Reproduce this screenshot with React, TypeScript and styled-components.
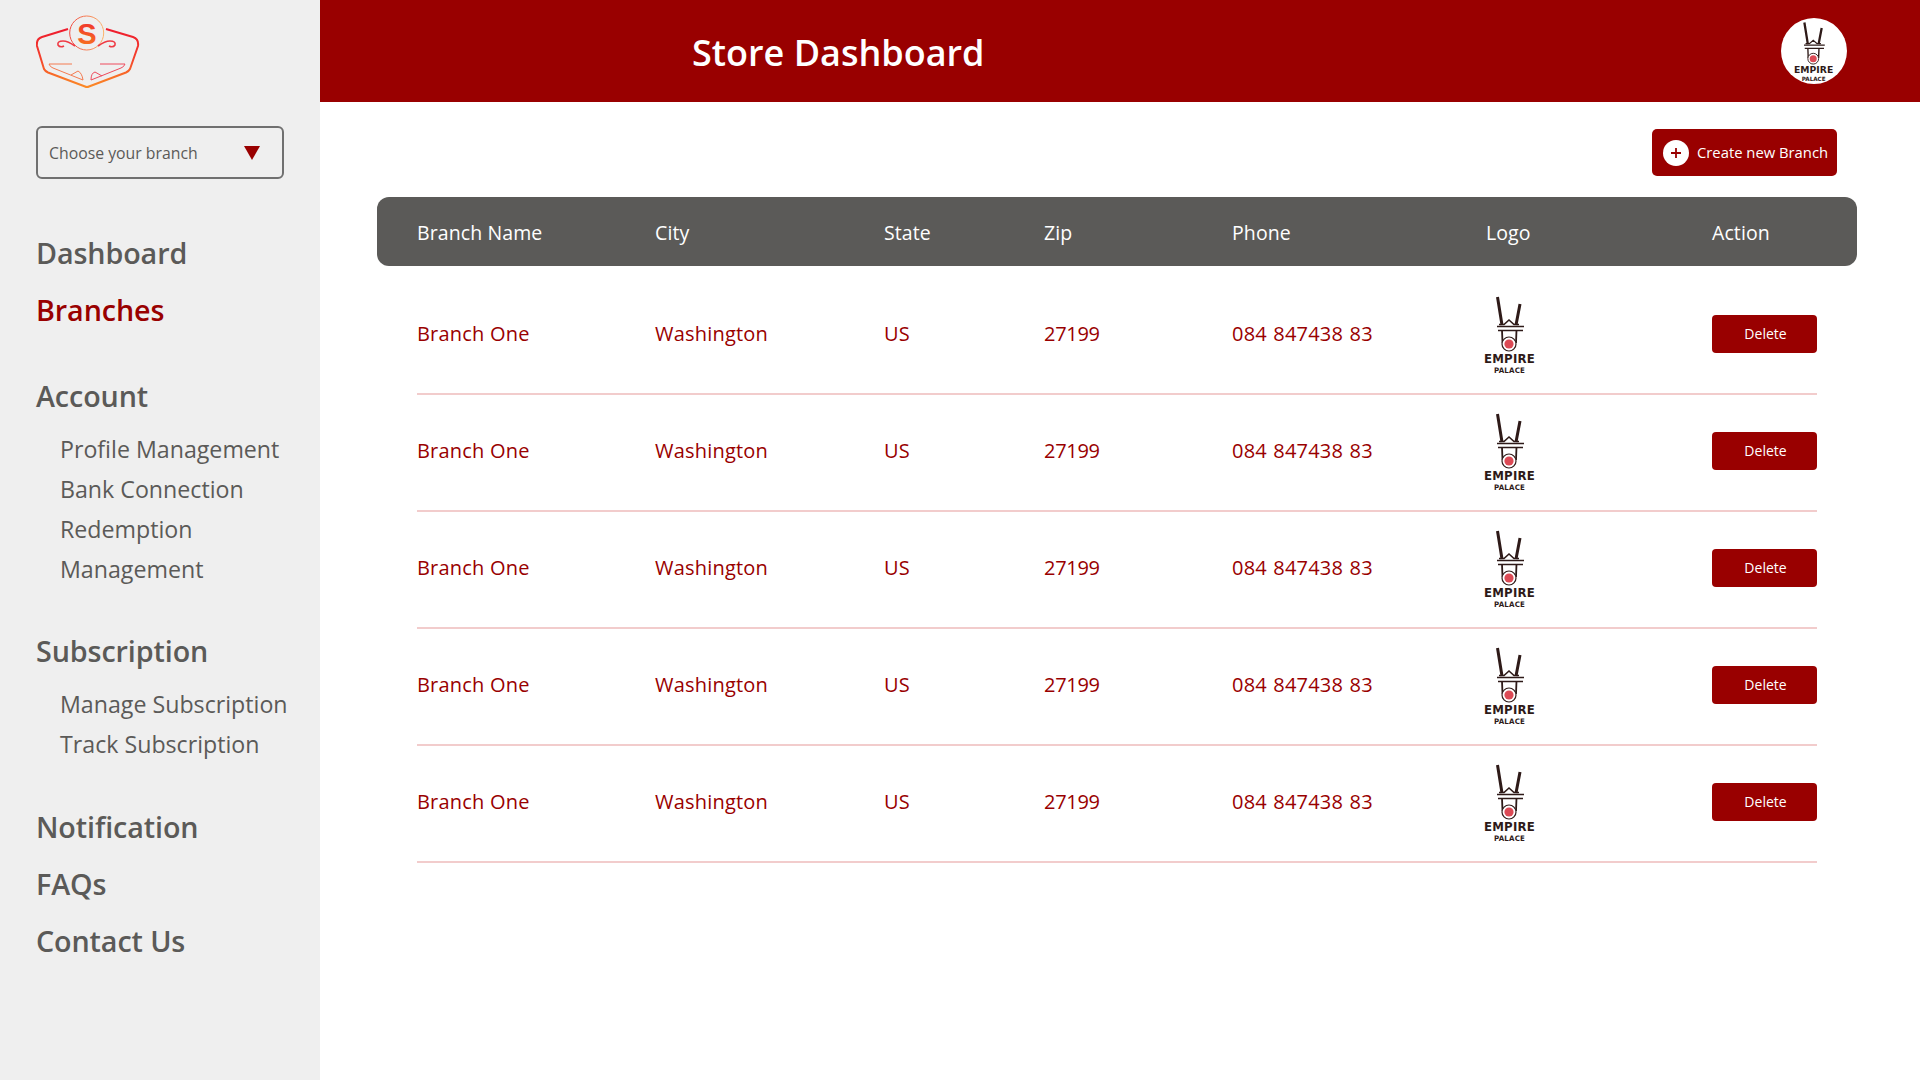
import React from "react";
import styled, { createGlobalStyle } from "styled-components";

const RED = "#990000";
const GREY = "#5b5a58";

const branches = [1, 2, 3, 4, 5].map((id) => ({
    id,
    name: "Branch One",
    city: "Washington",
    state: "US",
    zip: "27199",
    phone: "084 847438 83",
}));

const GlobalStyle = createGlobalStyle`
    * { box-sizing: border-box; }
    html, body { margin: 0; padding: 0; background: #fff; }
    body { font-family: "Open Sans", "Noto Sans", sans-serif; }
`;

const BrandLogo = () => (
    <svg width="104" height="74" viewBox="0 0 104 74" fill="none">
        <defs>
            <linearGradient id="brandStroke" gradientUnits="userSpaceOnUse" x1="0" y1="14" x2="0" y2="72">
                <stop offset="0" stopColor="#ee1c2e" />
                <stop offset="0.5" stopColor="#f4402c" />
                <stop offset="1" stopColor="#fb8a26" />
            </linearGradient>
            <linearGradient id="brandRing" x1="0" y1="0" x2="1" y2="0">
                <stop offset="0" stopColor="#f0483e" />
                <stop offset="1" stopColor="#fbb36a" />
            </linearGradient>
            <linearGradient id="brandS" x1="0" y1="0" x2="0" y2="1">
                <stop offset="0" stopColor="#ee2a30" />
                <stop offset="1" stopColor="#f97a1e" />
            </linearGradient>
        </defs>
        <path
            d="M32 14 L6 22 Q0 24 1 31 L8 54 Q9 56 12 57.5 L49 71.5 Q51 72.5 53 71.5 L90 57.5 Q93 56 94 54 L102 31 Q103 24 97 22 L70 14"
            stroke="url(#brandStroke)"
            strokeWidth="2"
            strokeLinejoin="round"
        />
        <circle cx="50.7" cy="18" r="17" stroke="url(#brandRing)" strokeWidth="1" />
        <text x="51" y="28.5" textAnchor="middle" fontFamily="Liberation Sans, sans-serif" fontWeight="700" fontSize="29" fill="url(#brandS)">S</text>
        <path d="M39 31 Q32 26 27 26 Q21 26 22 30 Q24 33 28 31" stroke="#ef3a44" strokeWidth="1.6" />
        <path d="M62 31 Q69 26 74 26 Q80 26 79 30 Q77 33 73 31" stroke="#ef3a44" strokeWidth="1.6" />
        <path d="M13 49 L36 49 M13 49 Q14 52 17 53 L47 65 Q46 58 42 56 L35 60" stroke="#f47a50" strokeWidth="1" />
        <path d="M89 49 L64 49 M89 49 Q88 52 85 53 L55 65 Q55 58 59 57 L66 61" stroke="#ee4a5c" strokeWidth="1" />
    </svg>
);

const EmpireMark = ({ className }: { className?: string }) => (
    <svg className={className} width="52" height="78" viewBox="0 0 52 78" fill="none">
        <path d="M13.5 2 L18 30 M36 9 L32 30" stroke="#2e1a18" strokeWidth="3" />
        <path d="M15 29.5 L20 29.5 L25 25 L30 29.5 L35 29.5" stroke="#2e1a18" strokeWidth="1.6" />
        <path d="M13 31.5 L40 31.5 M14 35.5 L39 35.5" stroke="#2e1a18" strokeWidth="1.6" />
        <path d="M18 35 L18.5 48 M32.5 35 L32 48" stroke="#2e1a18" strokeWidth="1.8" />
        <circle cx="25" cy="49" r="7" fill="#fff" stroke="#2e1a18" strokeWidth="1.2" />
        <circle cx="25" cy="49" r="4.6" fill="#dc4a55" />
        <text x="25.5" y="68" textAnchor="middle" fontFamily="DejaVu Sans, sans-serif" fontWeight="700" fontSize="11.5" textLength="51" lengthAdjust="spacingAndGlyphs" fill="#2e1a18">EMPIRE</text>
        <text x="25.5" y="77.5" textAnchor="middle" fontFamily="DejaVu Sans, sans-serif" fontWeight="700" fontSize="7.5" textLength="31" lengthAdjust="spacingAndGlyphs" fill="#2e1a18">PALACE</text>
    </svg>
);

const App = () => {
    return (
        <Page>
            <GlobalStyle />
            <Sidebar>
                <LogoWrap><BrandLogo /></LogoWrap>
                <BranchSelect>
                    <span>Choose your branch</span>
                    <Caret />
                </BranchSelect>
                <Nav>
                    <NavGroup>
                        <NavTitle>Dashboard</NavTitle>
                        <NavTitle $active>Branches</NavTitle>
                    </NavGroup>
                    <NavGroup>
                        <NavTitle>Account</NavTitle>
                        <SubList>
                            <SubItem>Profile Management</SubItem>
                            <SubItem>Bank Connection</SubItem>
                            <SubItem>Redemption</SubItem>
                            <SubItem>Management</SubItem>
                        </SubList>
                    </NavGroup>
                    <NavGroup>
                        <NavTitle>Subscription</NavTitle>
                        <SubList>
                            <SubItem>Manage Subscription</SubItem>
                            <SubItem>Track Subscription</SubItem>
                        </SubList>
                    </NavGroup>
                    <LastGroup>
                        <NavTitle>Notification</NavTitle>
                        <NavTitle>FAQs</NavTitle>
                        <NavTitle>Contact Us</NavTitle>
                    </LastGroup>
                </Nav>
            </Sidebar>
            <Main>
                <Header>
                    <Title>Store Dashboard</Title>
                    <Avatar><SmallMark /></Avatar>
                </Header>
                <Content>
                    <Toolbar>
                        <CreateButton>
                            <PlusCircle>
                                <svg width="12" height="12" viewBox="0 0 12 12">
                                    <path d="M6 1 V11 M1 6 H11" stroke={RED} strokeWidth="1.8" />
                                </svg>
                            </PlusCircle>
                            <span>Create new Branch</span>
                        </CreateButton>
                    </Toolbar>
                    <TableHead>
                        <span>Branch Name</span>
                        <span>City</span>
                        <span>State</span>
                        <span>Zip</span>
                        <span>Phone</span>
                        <span>Logo</span>
                        <span>Action</span>
                    </TableHead>
                    <Rows>
                        {branches.map((branch) => (
                            <Row key={branch.id}>
                                <span>{branch.name}</span>
                                <span>{branch.city}</span>
                                <span>{branch.state}</span>
                                <ZipCell>{branch.zip}</ZipCell>
                                <PhoneCell>{branch.phone}</PhoneCell>
                                <RowLogo><EmpireMark /></RowLogo>
                                <DeleteButton>Delete</DeleteButton>
                            </Row>
                        ))}
                    </Rows>
                </Content>
            </Main>
        </Page>
    );
};

export default App;

const Page = styled.div`
    display: flex;
    width: 1920px;
    height: 1080px;
    overflow: hidden;
`;

const Sidebar = styled.aside`
    width: 320px;
    flex-shrink: 0;
    background: #efefef;
    padding: 15px 0 0 36px;
`;

const LogoWrap = styled.div`
    height: 74px;
`;

const BranchSelect = styled.div`
    width: 248px;
    height: 53px;
    margin-top: 37px;
    padding: 0 22px 0 11px;
    display: flex;
    align-items: center;
    justify-content: space-between;
    border: 2px solid #707070;
    border-radius: 6px;
    font-size: 15.8px;
    color: ${GREY};
`;

const Caret = styled.i`
    width: 0;
    height: 0;
    border-left: 8px solid transparent;
    border-right: 8px solid transparent;
    border-top: 14px solid ${RED};
`;

const Nav = styled.nav`
    margin-top: 45px;
    display: flex;
    flex-direction: column;
    gap: 29px;
`;

const NavGroup = styled.div`
    display: flex;
    flex-direction: column;
`;

const LastGroup = styled(NavGroup)`
    margin-top: 1px;
`;

const NavTitle = styled.div<{ $active?: boolean }>`
    height: 57px;
    line-height: 57px;
    font-size: 28.7px;
    letter-spacing: -0.1px;
    font-weight: 600;
    color: ${(p) => (p.$active ? RED : GREY)};
`;

const SubList = styled.div`
    display: flex;
    flex-direction: column;
    margin: 5px 0 4px;
    padding-left: 24px;
`;

const SubItem = styled.div`
    height: 40px;
    line-height: 40px;
    font-size: 23.2px;
    color: ${GREY};
`;

const Main = styled.main`
    flex: 1;
    display: flex;
    flex-direction: column;
`;

const Header = styled.header`
    height: 102px;
    background: ${RED};
    padding: 0 73px 0 372px;
    display: flex;
    align-items: center;
    justify-content: space-between;
`;

const Title = styled.h1`
    margin: 3px 0 0;
    font-size: 36px;
    font-weight: 600;
    color: #fff;
`;

const Avatar = styled.div`
    width: 66px;
    height: 66px;
    border-radius: 50%;
    background: #fff;
    display: flex;
    align-items: center;
    justify-content: center;
    overflow: hidden;
`;

const SmallMark = styled(EmpireMark)`
    width: 40px;
    height: 60px;
`;

const Content = styled.div`
    padding: 27px 63px 0 57px;
`;

const Toolbar = styled.div`
    display: flex;
    justify-content: flex-end;
    padding-right: 20px;
`;

const CreateButton = styled.button`
    width: 185px;
    height: 47px;
    padding: 0 0 2px 11px;
    display: flex;
    align-items: center;
    gap: 8px;
    background: ${RED};
    color: #fff;
    border: 0;
    border-radius: 5px;
    font-family: inherit;
    font-size: 14.8px;
`;

const PlusCircle = styled.span`
    width: 26px;
    height: 26px;
    margin-top: 2px;
    border-radius: 50%;
    background: #fff;
    display: flex;
    align-items: center;
    justify-content: center;
`;

const columns = "238px 229px 160px 188px 254px 226px 105px";

const TableHead = styled.div`
    margin-top: 21px;
    height: 69px;
    padding: 2px 0 0 40px;
    display: grid;
    grid-template-columns: ${columns};
    align-items: center;
    background: ${GREY};
    border-radius: 12px;
    color: #fff;
    font-size: 19.5px;
    letter-spacing: 0.1px;
`;

const Rows = styled.div`
    margin: 12px 0 0 40px;
    width: 1400px;
`;

const Row = styled.div`
    height: 117px;
    padding-bottom: 4px;
    display: grid;
    grid-template-columns: ${columns};
    align-items: center;
    border-bottom: 2px solid #f2cccc;
    color: ${RED};
    font-size: 20px;
    font-weight: 500;
    letter-spacing: 0.2px;
`;

const ZipCell = styled.span`
    letter-spacing: -0.3px;
`;

const PhoneCell = styled.span`
    word-spacing: 1px;
`;

const RowLogo = styled.div`
    display: flex;
    margin-left: -2px;
    height: 78px;
`;

const DeleteButton = styled.button`
    width: 105px;
    height: 38px;
    padding: 0 0 0 2px;
    background: ${RED};
    color: #fff;
    border: 0;
    border-radius: 4px;
    font-family: inherit;
    font-size: 14px;
    letter-spacing: 0;
`;
